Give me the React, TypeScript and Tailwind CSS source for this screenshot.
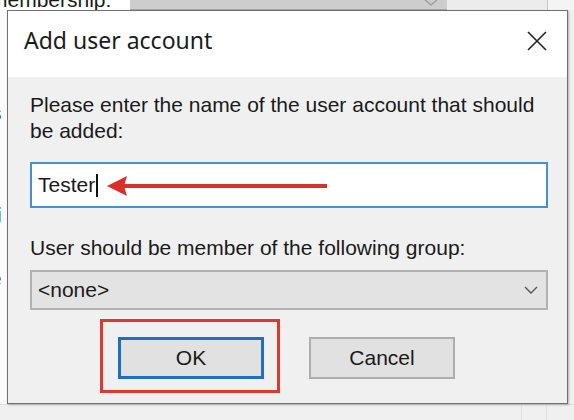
import React from "react";

const sans = { fontFamily: '"Liberation Sans", Arial, sans-serif' };
const title = { fontFamily: '"Segoe UI", "Noto Sans", "Open Sans", sans-serif' };

export default function App() {
  return (
    <div className="relative w-[574px] h-[420px] overflow-hidden bg-[#f0f0f0] flex flex-col" style={sans}>
      {/* background window */}
      <div className="h-[10px] flex shrink-0">
        <div className="w-[130px] bg-white overflow-hidden">
          <div className="ml-[-10px] mt-[-11px] text-[21px] leading-[21px] text-[#1a1a1a] whitespace-nowrap">membership:</div>
        </div>
        <div className="w-[317px] bg-[#cdcdcd] border-b border-[#a8a8a8] flex justify-end items-start pr-[8px]">
          <svg width="16" height="8" viewBox="0 0 16 8" className="mt-[-2px]">
            <path d="M1 1 L8 7 L15 1" fill="none" stroke="#9a9a9a" strokeWidth="1.2" />
          </svg>
        </div>
        <div className="w-[101px] bg-[#ececec] border-r border-[#c4c4c4]" />
        <div className="flex-1 bg-[#f4f4f4]" />
      </div>
      <div className="flex-1 flex">
        <div className="w-[7px] bg-[#fbfbfb] overflow-hidden flex flex-col text-[21px] leading-[22px] text-[#333]">
          <div className="mt-[92px] ml-[-9px]">s</div>
          <div className="mt-[18px] ml-[-11px] text-[#111]">n</div>
          <div className="mt-[40px] ml-[-3px] text-[#111]">i</div>
          <div className="mt-[42px] ml-[-10px] text-[#555]">e</div>
          <div className="mt-[79px] ml-[-8px] text-[#111]">i</div>
        </div>
        <div className="flex-1 bg-[#f0f0f0]" />
      </div>
      <div className="h-[16px] shrink-0 bg-[#f0f0f0] border-t border-[#dedede] flex">
        <div className="w-[522px] border-r border-[#e0e0e0]" />
        <div className="w-[25px] border-r border-[#e0e0e0]" />
      </div>

      {/* dialog */}
      <div className="absolute left-[7px] top-[10px] w-[561px] h-[394px] border border-[#707070] shadow-[1px_1px_2px_rgba(0,0,0,0.25)] flex flex-col bg-[#f0f0f0]">
        <div className="h-[66px] bg-white flex items-start justify-between pl-[16px] pr-[19px] pt-[14px] shrink-0">
          <div className="text-[23px] leading-[30px] text-[#1b1b1b]" style={title}>Add user account</div>
          <svg width="22" height="22" viewBox="0 0 22 22" className="mt-[5px]">
            <path d="M2 2 L20 20 M20 2 L2 20" stroke="#222" strokeWidth="1.6" fill="none" />
          </svg>
        </div>
        <div className="flex-1 flex flex-col pl-[22px] pr-[19px] pt-[15px] text-[21px] text-[#1a1a1a]">
          <div className="leading-[26px] whitespace-nowrap">
            Please enter the name of the user account that should
            <br />
            be added:
          </div>
          <div className="mt-[18px] h-[46px] border-2 border-[#4a8ed0] bg-white flex items-center pl-[6px]">
            <span className="leading-[24px]">Tester</span>
            <span className="w-[2px] h-[23px] bg-[#111] ml-[1px]" />
            <svg width="222" height="22" viewBox="0 0 222 22" className="ml-[9px] mt-[1px]">
              <path d="M0 11 L20 1 L17 11 L20 21 Z" fill="#d8302a" />
              <rect x="16" y="9" width="204" height="4" fill="#d8302a" />
            </svg>
          </div>
          <div className="mt-[27px] leading-[26px]">User should be member of the following group:</div>
          <div className="mt-[9px] h-[40px] border-2 border-[#b2b2b2] bg-[#e3e3e3] flex items-center justify-between pl-[6px] pr-[8px]">
            <span className="leading-[24px]">&lt;none&gt;</span>
            <svg width="14" height="8" viewBox="0 0 14 8">
              <path d="M1 1 L7 7 L13 1" fill="none" stroke="#555" strokeWidth="1.4" />
            </svg>
          </div>
          <div className="mt-[27px] flex">
            <div className="relative ml-[88px]">
              <div className="w-[146px] h-[42px] border-[3px] border-[#1f6fc5] bg-[#e1e1e1] flex items-center justify-center leading-[24px]">
                OK
              </div>
              <div className="absolute left-[-18px] top-[-18px] w-[180px] h-[74px] border-[3px] border-[#dc3a2f]" />
            </div>
            <div className="ml-[45px] w-[146px] h-[42px] border-2 border-[#adadad] bg-[#e1e1e1] flex items-center justify-center leading-[24px]">
              Cancel
            </div>
          </div>
        </div>
      </div>
    </div>
  );
}
